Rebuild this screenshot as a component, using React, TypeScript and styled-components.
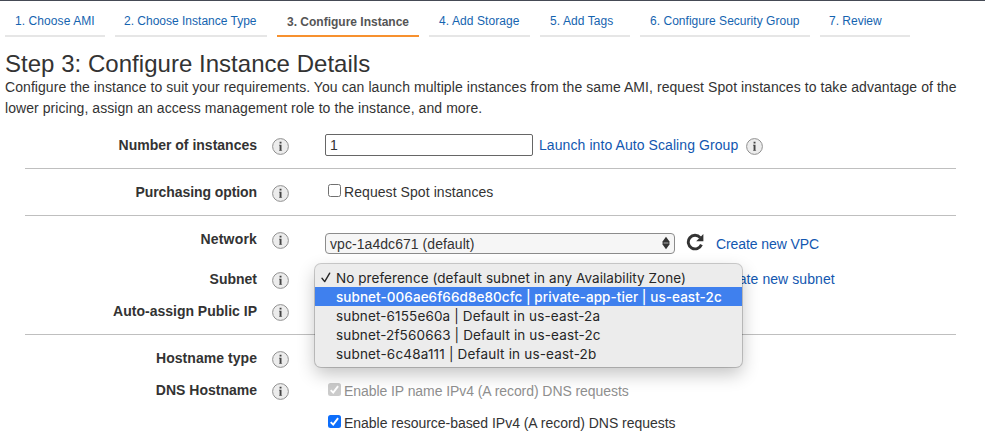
import React from 'react';
import styled, { createGlobalStyle, css } from 'styled-components';

const GlobalStyle = createGlobalStyle`
  * { box-sizing: border-box; }
  html, body { margin: 0; background: #fff; overflow: hidden; }
  body {
    font-family: "Liberation Sans", Arial, Helvetica, sans-serif;
    font-size: 14px;
    color: #333;
  }
`;

const Page = styled.div`
  width: 985px;
  height: 432px;
  overflow: hidden;
  border-top: 1px solid #454a55;
`;

const Steps = styled.nav`
  display: flex;
  gap: 10px;
  height: 36px;
  padding-left: 5px;
`;

const Step = styled.a<{ $width: number; $active?: boolean; $inset?: number; $spacing?: number }>`
  width: ${p => p.$width}px;
  padding: ${p => (p.$active ? 13 : 12)}px 0 0 ${p => p.$inset ?? 10}px;
  border-bottom: 2px solid ${p => (p.$active ? '#f7912f' : '#e6e6e6')};
  color: ${p => (p.$active ? '#555' : '#1564b0')};
  font-size: 12px;
  line-height: 16px;
  font-weight: ${p => (p.$active ? 700 : 400)};
  letter-spacing: ${p => p.$spacing ?? 0}px;
  white-space: nowrap;
`;

const Title = styled.h1`
  margin: 13px 0 0 5px;
  font-size: 24px;
  line-height: 28px;
  font-weight: 400;
  letter-spacing: 0.03px;
`;

const Intro = styled.p`
  margin: -1px 0 0 5px;
  height: 45px;
  line-height: 21px;
  letter-spacing: 0.066px;
  white-space: nowrap;
`;

const Group = styled.section<{ $top?: number; $bottom?: number; $last?: boolean }>`
  width: 931px;
  margin-left: 25px;
  padding: ${p => p.$top ?? 0}px 0 ${p => p.$bottom ?? 0}px;
  border-bottom: ${p => (p.$last ? 'none' : '1px solid #bfbfbf')};
`;

const Row = styled.div<{ $height: number }>`
  display: grid;
  grid-template-columns: 232px 17px 1fr;
  column-gap: 15px;
  align-items: center;
  height: ${p => p.$height}px;
`;

const Label = styled.label<{ $spacing?: number }>`
  text-align: right;
  font-weight: 700;
  line-height: 18px;
  letter-spacing: ${p => p.$spacing ?? 0}px;
`;

const Control = styled.div<{ $drop?: number }>`
  position: relative;
  display: flex;
  align-items: center;
  margin-left: 21px;
  padding-top: ${p => p.$drop ?? 0}px;
  white-space: nowrap;
`;

const InfoIcon = styled.svg`
  flex: none;
  display: block;
  width: 17px;
  height: 17px;
  margin-top: 3px;
`;

const Info = () => (
  <InfoIcon viewBox="0 0 17 17">
    <circle cx="8.5" cy="8.5" r="7.9" fill="#ececec" stroke="#909090" strokeWidth="1" />
    <path d="M7.6 3.8h1.9v1.7H7.6zM7 6.8h2.5v6.1H7.6V7.6H7z" fill="#444" />
    <path d="M7 12.2h3.1v.7H7z" fill="#777" />
  </InfoIcon>
);

const NumberField = styled.input`
  width: 208px;
  height: 22px;
  padding: 0 4px;
  border: 1px solid #666;
  border-radius: 2px;
  outline: none;
  background: #fff;
  color: #333;
  font: inherit;
`;

const Link = styled.a<{ $left: number; $right?: number; $spacing?: number }>`
  margin: 0 ${p => p.$right ?? 0}px 0 ${p => p.$left}px;
  color: #1257b0;
  letter-spacing: ${p => p.$spacing ?? 0}px;
`;

const SelectBox = styled.div`
  display: flex;
  align-items: center;
  justify-content: space-between;
  width: 350px;
  height: 21px;
  padding: 1px 3px 0 4px;
  border: 1px solid #8c8c8c;
  border-radius: 4px;
  background: #f6f6f6;
`;

const SelectArrows = styled.svg`
  width: 10px;
  height: 14px;
  margin-top: -3px;
`;

const RefreshIcon = styled.svg`
  width: 18px;
  height: 18px;
  margin: -3px 0 0 11px;
`;

const CheckRow = styled.label<{ $disabled?: boolean }>`
  display: flex;
  align-items: center;
  gap: 3px;
  padding-left: 3px;
  color: ${p => (p.$disabled ? '#8f8f8f' : '#333')};
`;

const Box = styled.span<{ $tone: 'empty' | 'muted' | 'blue' }>`
  display: flex;
  width: 13px;
  height: 13px;
  margin-top: -4px;
  border-radius: 2.5px;
  ${p => p.$tone === 'empty' && css`border: 1px solid #707070;`}
  ${p => p.$tone === 'muted' && css`background: #cbcbcb;`}
  ${p => p.$tone === 'blue' && css`background: #0d6efb;`}
`;

const Tick = () => (
  <svg width="13" height="13" viewBox="0 0 13 13" fill="none">
    <path d="M2.7 7.1 5.2 9.6 10.1 3.1" stroke="#fff" strokeWidth="1.9" />
  </svg>
);

const Text = styled.span<{ $spacing?: number }>`
  letter-spacing: ${p => p.$spacing ?? 0}px;
`;

const Menu = styled.ul`
  position: absolute;
  top: -7px;
  left: -10px;
  z-index: 2;
  width: 427px;
  margin: 0;
  padding: 4px 0;
  list-style: none;
  border-radius: 6px;
  background: #ececec;
  box-shadow: 0 0 0 1px rgba(0, 0, 0, 0.19), 0 7px 18px rgba(0, 0, 0, 0.24);
  font-family: Inter, sans-serif;
  font-size: 13.5px;
  color: #262626;
`;

const Option = styled.li<{ $active?: boolean; $spacing: number }>`
  display: flex;
  align-items: center;
  height: 19px;
  letter-spacing: ${p => p.$spacing}px;
  background: ${p => (p.$active ? '#3f80ee' : 'transparent')};
  color: ${p => (p.$active ? '#fff' : 'inherit')};
  font-weight: ${p => (p.$active ? 500 : 400)};
`;

const CheckSlot = styled.span`
  display: flex;
  width: 21px;
  padding-left: 6px;
`;

const steps = [
  { text: '1. Choose AMI', width: 100, spacing: 0.08 },
  { text: '2. Choose Instance Type', width: 152, inset: 9 },
  { text: '3. Configure Instance', width: 142, active: true },
  { text: '4. Add Storage', width: 101, spacing: 0.08 },
  { text: '5. Add Tags', width: 90, spacing: 0.08 },
  { text: '6. Configure Security Group', width: 170, spacing: 0.03 },
  { text: '7. Review', width: 90, inset: 9 },
];

const subnets = [
  { text: 'No preference (default subnet in any Availability Zone)', spacing: 0.06, checked: true },
  { text: 'subnet-006ae6f66d8e80cfc | private-app-tier | us-east-2c', spacing: 0.06, active: true },
  { text: 'subnet-6155e60a | Default in us-east-2a', spacing: 0.14 },
  { text: 'subnet-2f560663 | Default in us-east-2c', spacing: 0.14 },
  { text: 'subnet-6c48a111 | Default in us-east-2b', spacing: 0.18 },
];

export default function App() {
  return (
    <>
      <GlobalStyle />
      <Page>
        <Steps>
          {steps.map(s => (
            <Step key={s.text} $width={s.width} $active={s.active} $inset={s.inset} $spacing={s.spacing}>
              {s.text}
            </Step>
          ))}
        </Steps>
        <Title>Step 3: Configure Instance Details</Title>
        <Intro>
          Configure the instance to suit your requirements. You can launch multiple instances from the same AMI, request Spot instances to take advantage of the
          <br />
          lower pricing, assign an access management role to the instance, and more.
        </Intro>

        <Group>
          <Row $height={46}>
            <Label>Number of instances</Label>
            <Info />
            <Control>
              <NumberField defaultValue="1" />
              <Link $left={6} $right={8} $spacing={0.08}>Launch into Auto Scaling Group</Link>
              <Info />
            </Control>
          </Row>
        </Group>

        <Group>
          <Row $height={46}>
            <Label $spacing={-0.08}>Purchasing option</Label>
            <Info />
            <Control>
              <CheckRow>
                <Box $tone="empty" />
                <Text $spacing={0.07}>Request Spot instances</Text>
              </CheckRow>
            </Control>
          </Row>
        </Group>

        <Group $bottom={8}>
          <Row $height={46}>
            <Label $spacing={0.18}>Network</Label>
            <Info />
            <Control $drop={9}>
              <SelectBox>
                <Text $spacing={0.06}>vpc-1a4dc671 (default)</Text>
                <SelectArrows viewBox="0 0 10 14">
                  <path d="M5 0.8 9 6.2 7.4 7 9 7.8 5 13.2 1 7.8 2.6 7 1 6.2z" fill="#333" />
                  <path d="M2.8 7h4.4" stroke="#d0d0d0" strokeWidth="0.8" />
                </SelectArrows>
              </SelectBox>
              <RefreshIcon viewBox="0 0 18 18">
                <path d="M14.2 4.6A6.8 6.8 0 1 0 15.4 11.6" fill="none" stroke="#333" strokeWidth="2.9" />
                <path d="M17.4 1v7.2h-7.2z" fill="#333" />
              </RefreshIcon>
              <Link $left={12} $spacing={-0.08}>Create new VPC</Link>
            </Control>
          </Row>
          <Row $height={34}>
            <Label>Subnet</Label>
            <Info />
            <Control>
              <Link $left={391} $spacing={0.07}>Create new subnet</Link>
              <Menu>
                {subnets.map(o => (
                  <Option key={o.text} $active={o.active} $spacing={o.spacing}>
                    <CheckSlot>
                      {o.checked && (
                        <svg width="10" height="11" viewBox="0 0 10 11" fill="none">
                          <path d="M1 6.3 3.7 9.6 8.7 1.2" stroke="#262626" strokeWidth="1.4" strokeLinecap="round" strokeLinejoin="round" />
                        </svg>
                      )}
                    </CheckSlot>
                    {o.text}
                  </Option>
                ))}
              </Menu>
            </Control>
          </Row>
          <Row $height={30}>
            <Label>Auto-assign Public IP</Label>
            <Info />
          </Row>
        </Group>

        <Group $top={7} $last>
          <Row $height={32}>
            <Label $spacing={0.05}>Hostname type</Label>
            <Info />
          </Row>
          <Row $height={32}>
            <Label>DNS Hostname</Label>
            <Info />
            <Control $drop={2}>
              <CheckRow $disabled>
                <Box $tone="muted"><Tick /></Box>
                <Text $spacing={-0.07}>Enable IP name IPv4 (A record) DNS requests</Text>
              </CheckRow>
            </Control>
          </Row>
          <Row $height={32}>
            <span />
            <span />
            <Control $drop={2}>
              <CheckRow>
                <Box $tone="blue"><Tick /></Box>
                <Text $spacing={-0.03}>Enable resource-based IPv4 (A record) DNS requests</Text>
              </CheckRow>
            </Control>
          </Row>
        </Group>
      </Page>
    </>
  );
}
